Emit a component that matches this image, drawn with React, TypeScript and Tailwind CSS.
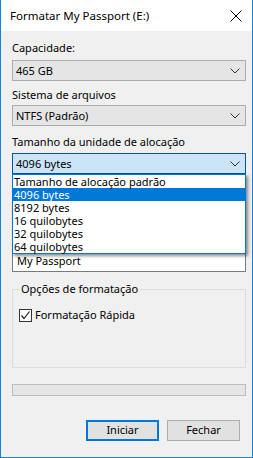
import React from 'react';

const Chevron = () => (
  <svg width="10" height="6" viewBox="0 0 10 6" className="shrink-0">
    <path d="M0.5 0.5 L5 5 L9.5 0.5" fill="none" stroke="#333" strokeWidth="1" />
  </svg>
);

const Combo = ({ value, focused = false }: { value: string; focused?: boolean }) => (
  <div
    className={
      focused
        ? 'h-[21px] flex items-center justify-between pl-[3px] pr-[5px] border border-[#005499] bg-[#cce4f7]'
        : 'h-[21px] flex items-center justify-between pl-[3px] pr-[5px] border border-[#adadad] bg-[#e5e5e5]'
    }
  >
    <span className="leading-none">{value}</span>
    <Chevron />
  </div>
);

const App = () => {
  const sizes = [
    'Tamanho de alocação padrão',
    '4096 bytes',
    '8192 bytes',
    '16 quilobytes',
    '32 quilobytes',
    '64 quilobytes',
  ];

  return (
    <div
      className="w-[253px] h-[458px] border border-t-0 border-[#1883d7] bg-[#f0f0f0] flex flex-col text-[11px] text-black"
      style={{ fontFamily: '"Noto Sans", "Liberation Sans", sans-serif' }}
    >
      {/* title bar */}
      <div className="h-[31px] bg-white flex items-center justify-between pl-[9px] pr-[10px] shrink-0 text-[11.5px]">
        <span>Formatar My Passport (E:)</span>
        <svg width="12" height="12" viewBox="0 0 12 12">
          <path d="M0.5 0.5 L11.5 11.5 M11.5 0.5 L0.5 11.5" stroke="#000" strokeWidth="1" />
        </svg>
      </div>

      <div className="flex flex-col pl-[11px] pr-[6px] pt-[9px]">
        <div className="h-[16px] leading-[16px]">Capacidade:</div>
        <div className="mt-[4px]">
          <Combo value="465 GB" />
        </div>

        <div className="h-[16px] leading-[16px] mt-[6px]">Sistema de arquivos</div>
        <div className="mt-[2px]">
          <Combo value="NTFS (Padrão)" />
        </div>

        <div className="h-[16px] leading-[16px] mt-[8px]">Tamanho da unidade de alocação</div>
        <div className="mt-[3px] relative">
          <Combo value="4096 bytes" focused />
          {/* open dropdown list, covers the volume label */}
          <ul className="absolute left-0 right-0 top-[21px] z-10 bg-white border border-[#0078d7] shadow-[2px_2px_3px_rgba(0,0,0,0.45)]">
            {sizes.map((s, i) => (
              <li
                key={s}
                className={
                  i === 1
                    ? 'h-[13px] flex items-center pl-[1px] bg-[#0078d7] text-white'
                    : 'h-[13px] flex items-center pl-[1px]'
                }
              >
                <span className="leading-[11px]">{s}</span>
              </li>
            ))}
          </ul>
        </div>

        <div className="mt-[77px] h-[21px] bg-white border border-[#7a7a7a] flex items-center pl-[4px]">
          My Passport
        </div>

        {/* group box */}
        <fieldset className="mt-[10px] h-[86px] border border-[#dcdcdc] px-[6px] pt-[11px]">
          <legend className="px-[2px] leading-[14px]">Opções de formatação</legend>
          <label className="flex items-center gap-[3px]">
            <span className="w-[13px] h-[13px] bg-white border border-[#333] flex items-center justify-center">
              <svg width="11" height="11" viewBox="0 0 11 11">
                <path d="M1.5 5.5 L4 8.5 L9.5 1.5" fill="none" stroke="#222" strokeWidth="1.2" />
              </svg>
            </span>
            <span>Formatação Rápida</span>
          </label>
        </fieldset>

        {/* progress */}
        <div className="mt-[16px] h-[12px] border border-[#bcbcbc] bg-[#e6e6e6]" />

        <div className="mt-[24px] flex justify-end gap-[8px] pr-[6px]">
          <button className="w-[73px] h-[21px] border-2 border-[#0078d7] bg-[#e1e1e1] flex items-center justify-center">
            Iniciar
          </button>
          <button className="w-[73px] h-[21px] border border-[#adadad] bg-[#e1e1e1] flex items-center justify-center">
            Fechar
          </button>
        </div>
      </div>
    </div>
  );
};

export default App;
